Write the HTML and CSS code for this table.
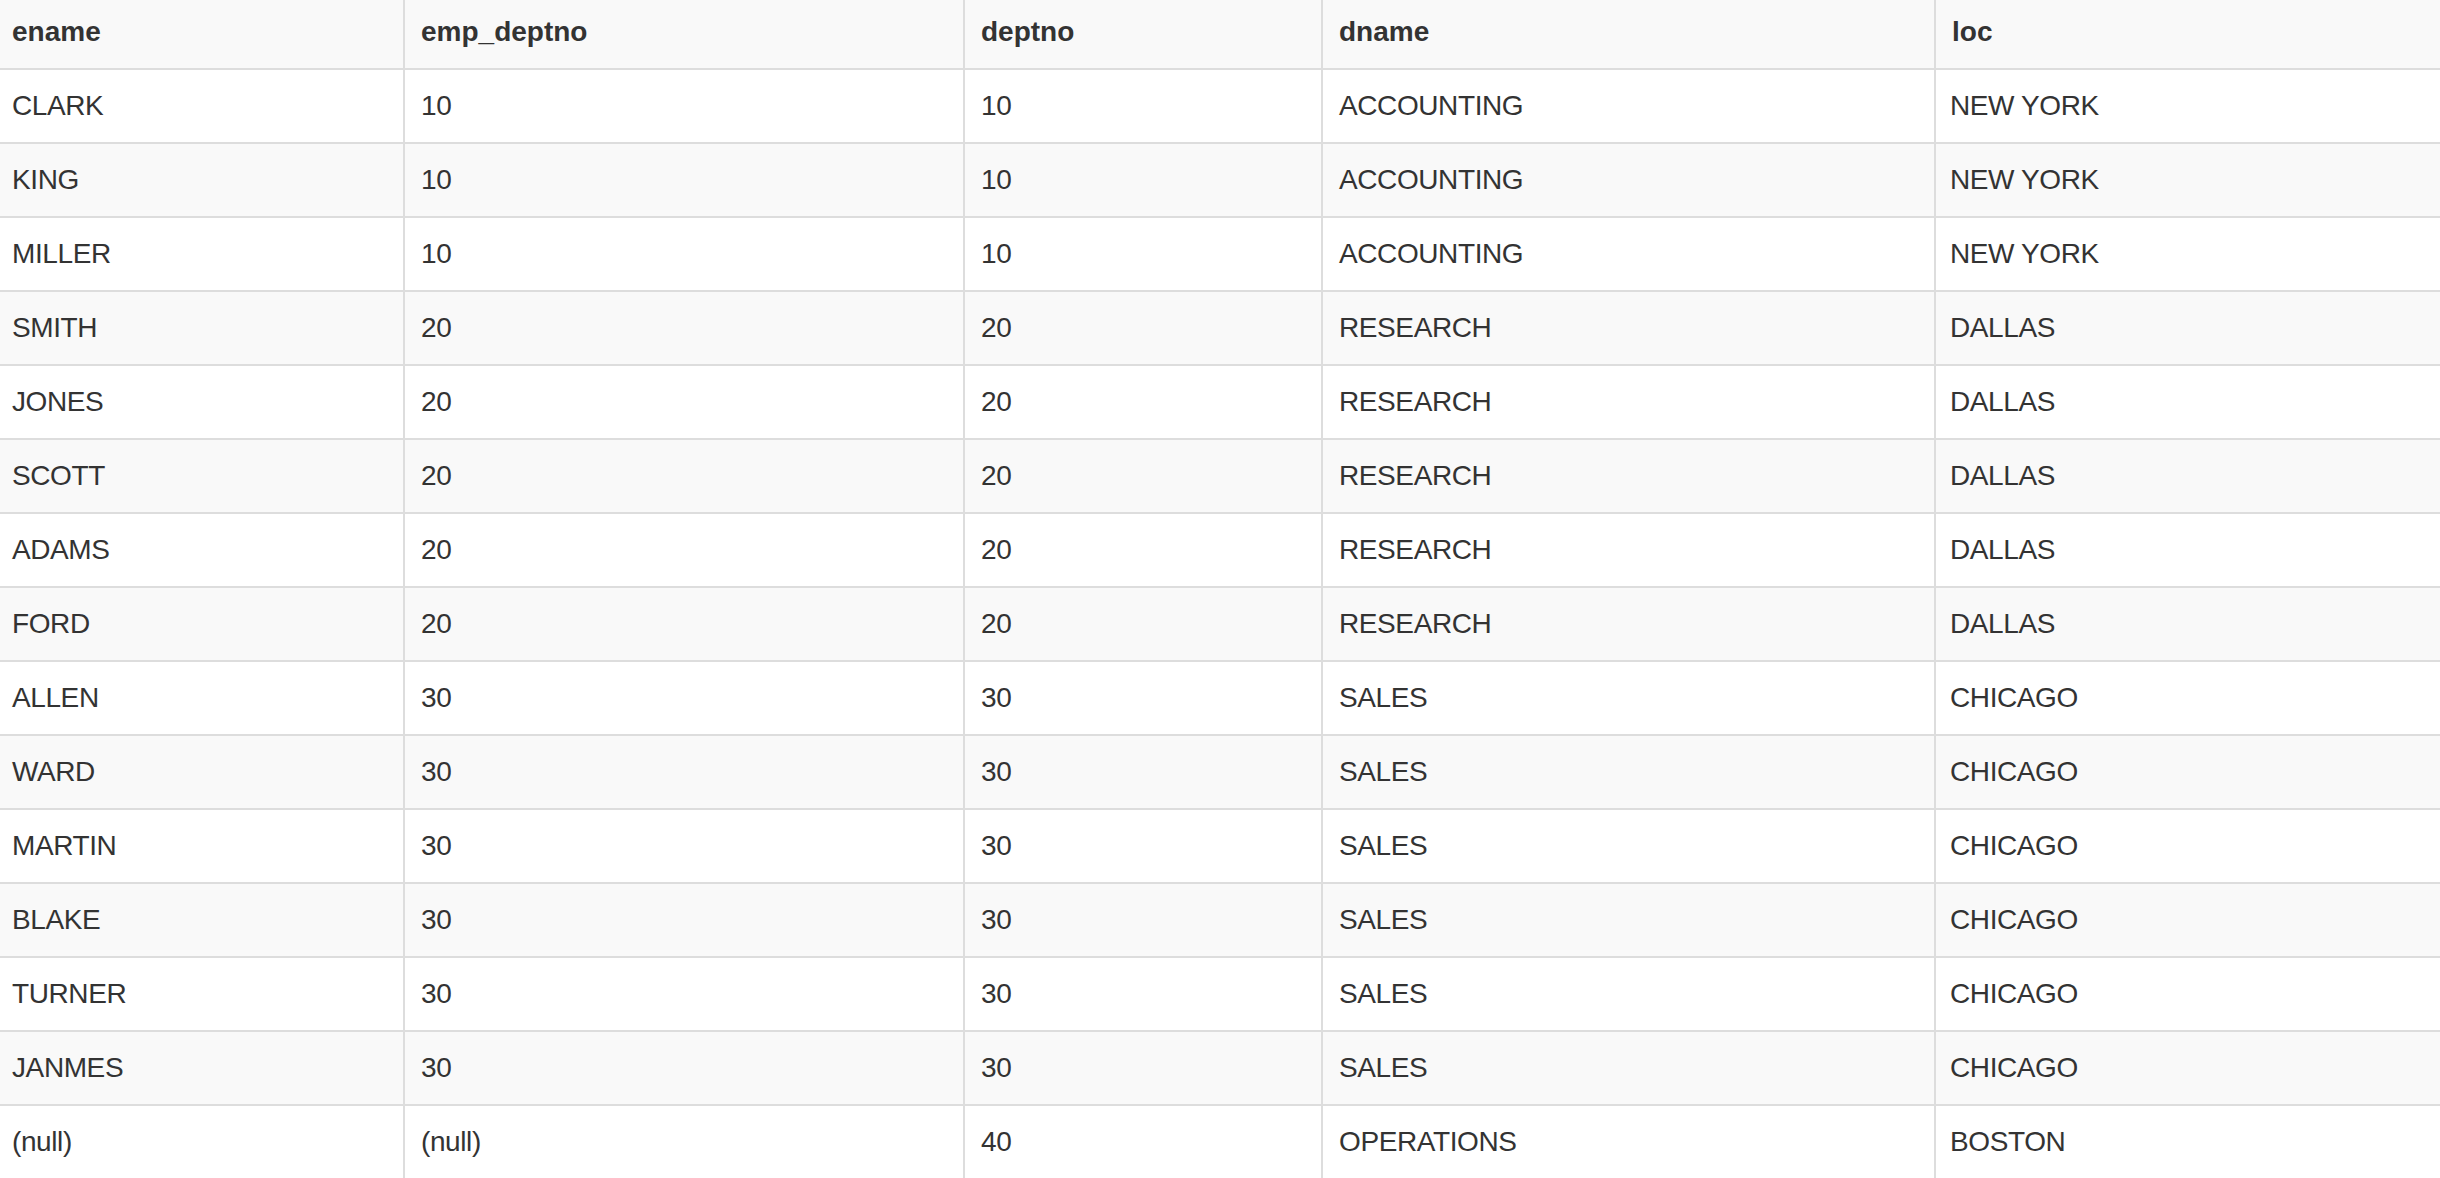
FILE: index.html
```html
<!DOCTYPE html>
<html>
<head>
<meta charset="utf-8">
<link rel="stylesheet" href="styles.css">
</head>
<body>
<table class="grid">
  <thead>
    <tr><th class="c1">ename</th><th class="c2">emp_deptno</th><th class="c3">deptno</th><th class="c4">dname</th><th class="c5">loc</th></tr>
  </thead>
  <tbody>
    <tr><td>CLARK</td><td>10</td><td>10</td><td>ACCOUNTING</td><td>NEW YORK</td></tr>
    <tr><td>KING</td><td>10</td><td>10</td><td>ACCOUNTING</td><td>NEW YORK</td></tr>
    <tr><td>MILLER</td><td>10</td><td>10</td><td>ACCOUNTING</td><td>NEW YORK</td></tr>
    <tr><td>SMITH</td><td>20</td><td>20</td><td>RESEARCH</td><td>DALLAS</td></tr>
    <tr><td>JONES</td><td>20</td><td>20</td><td>RESEARCH</td><td>DALLAS</td></tr>
    <tr><td>SCOTT</td><td>20</td><td>20</td><td>RESEARCH</td><td>DALLAS</td></tr>
    <tr><td>ADAMS</td><td>20</td><td>20</td><td>RESEARCH</td><td>DALLAS</td></tr>
    <tr><td>FORD</td><td>20</td><td>20</td><td>RESEARCH</td><td>DALLAS</td></tr>
    <tr><td>ALLEN</td><td>30</td><td>30</td><td>SALES</td><td>CHICAGO</td></tr>
    <tr><td>WARD</td><td>30</td><td>30</td><td>SALES</td><td>CHICAGO</td></tr>
    <tr><td>MARTIN</td><td>30</td><td>30</td><td>SALES</td><td>CHICAGO</td></tr>
    <tr><td>BLAKE</td><td>30</td><td>30</td><td>SALES</td><td>CHICAGO</td></tr>
    <tr><td>TURNER</td><td>30</td><td>30</td><td>SALES</td><td>CHICAGO</td></tr>
    <tr><td>JANMES</td><td>30</td><td>30</td><td>SALES</td><td>CHICAGO</td></tr>
    <tr><td>(null)</td><td>(null)</td><td>40</td><td>OPERATIONS</td><td>BOSTON</td></tr>
  </tbody>
</table>
</body>
</html>
```

FILE: styles.css
```css
html, body {
  margin: 0;
  padding: 0;
  background: #ffffff;
}

body {
  font-family: "Liberation Sans", Arial, Helvetica, sans-serif;
  font-size: 28px;
  color: #333333;
  overflow: hidden;
}

.grid {
  width: 2440px;
  table-layout: fixed;
  border-collapse: separate;
  border-spacing: 0;
}

.grid th,
.grid td {
  box-sizing: border-box;
  text-align: left;
  vertical-align: top;
  line-height: 40px;
  padding: 16px 16px;
  border-right: 2px solid #dddddd;
  border-bottom: 2px solid #dddddd;
  white-space: nowrap;
}

.grid th:last-child,
.grid td:last-child {
  border-right: none;
}

.grid th:first-child,
.grid td:first-child {
  padding-left: 12px;
}

.grid th {
  font-weight: bold;
  height: 70px;
  padding-top: 12px;
  padding-bottom: 16px;
  background: #f9f9f9;
}

.grid td {
  height: 74px;
  letter-spacing: -0.4px;
}

.grid td:last-child {
  padding-left: 14px;
}

.grid tbody tr:nth-child(even) td {
  background: #f9f9f9;
}

.c1 { width: 405px; }
.c2 { width: 560px; }
.c3 { width: 358px; }
.c4 { width: 613px; }
.c5 { width: 504px; }
```
